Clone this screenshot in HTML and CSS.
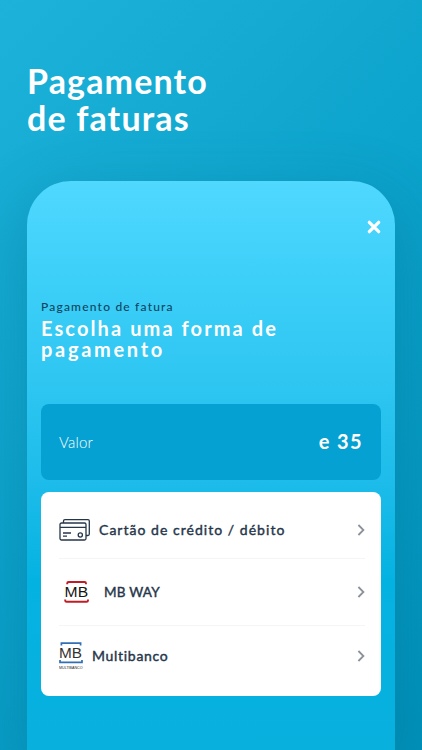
FILE: index.html
```html
<!doctype html>

<html lang="pt">

<head>

  <title>Pagamento de faturas</title>
  <meta charset="utf-8">
  <link rel="stylesheet" href="styles.css">

</head>

<body>

  <h1 class="title">Pagamento<br>de faturas</h1>

  <section class="phone">
      <button type="button" class="close" aria-label="Fechar">
          <svg width="14" height="14" viewBox="0 0 14 14"><path d="M2.3 2.3L11.7 11.7M11.7 2.3L2.3 11.7"/></svg>
      </button>

      <p class="subtitle">Pagamento de fatura</p>
      <h2 class="heading">Escolha uma forma de<br><span class="heading2">pagamento</span></h2>

      <div class="amount">
          <span class="label">Valor</span>
          <span class="value">e 35</span>
      </div>

      <div class="methods">
          <div class="method card">
              <svg class="icon" width="32" height="24" viewBox="0 0 32 24">
                  <g fill="none" stroke="#26364a" stroke-width="1.3" stroke-linejoin="round">
                      <path d="M4.5 5V3Q4.5 1.6 6 1.6H29Q30.3 1.6 30.3 3V16Q30.3 17.5 29 17.5H27"/>
                      <rect x="1" y="5" width="26" height="17" rx="1.5"/>
                      <path d="M1 9.4H27M4 15H12M4 18.2H8"/>
                      <circle cx="21.3" cy="17" r="2.1"/>
                  </g>
              </svg>
              <span class="name">Cartão de crédito / débito</span>
              <svg class="arrow" width="8" height="12" viewBox="0 0 8 12"><path d="M1.4 1L6.4 6L1.4 11"/></svg>
          </div>
          <div class="method mbway">
              <svg class="icon" width="26" height="24" viewBox="0 0 26 24">
                  <path d="M3.2 4.2V3.4Q3.2 2 4.6 2H20.6Q22 2 22 3.4V4.2M1.2 19.6V20.4Q1.2 21.8 2.6 21.8H22.6Q24 21.8 24 20.4V19.6" fill="none" stroke="#c01c26" stroke-width="1.9"/>
                  <text x="0.6" y="17" textLength="23.5" lengthAdjust="spacingAndGlyphs" class="logo">MB</text>
              </svg>
              <span class="name">MB WAY</span>
              <svg class="arrow" width="8" height="12" viewBox="0 0 8 12"><path d="M1.4 1L6.4 6L1.4 11"/></svg>
          </div>
          <div class="method multibanco">
              <svg class="icon" width="25" height="30" viewBox="0 0 25 30">
                  <path d="M2.4 4.6V2.2H21.6V4.6M1 19V21.4H23V19" fill="none" stroke="#326fb4" stroke-width="1.7"/>
                  <text x="0" y="17" textLength="23" lengthAdjust="spacingAndGlyphs" class="logo grey">MB</text>
                  <text x="0" y="28" textLength="23.5" lengthAdjust="spacingAndGlyphs" class="logo small">MULTIBANCO</text>
              </svg>
              <span class="name">Multibanco</span>
              <svg class="arrow" width="8" height="12" viewBox="0 0 8 12"><path d="M1.4 1L6.4 6L1.4 11"/></svg>
          </div>
      </div>
  </section>

</body>
</html>
```

FILE: styles.css
```css
* {
  box-sizing: border-box;
}
body {
  margin: 0;
  height: 750px;
  overflow: hidden;
  padding: 62px 27px 0;
  font-family: Lato, "Liberation Sans", sans-serif;
  background: linear-gradient(135deg, #1db2d9 0%, #0ba2cb 50%, #0092bb 100%);
}
.title {
  margin: 0;
  height: 119px;
  color: #fff;
  font-size: 34px;
  font-weight: bold;
  line-height: 37px;
  letter-spacing: 1.15px;
}
.phone {
  height: 569px;
  padding: 39px 14px 0;
  border-radius: 44px 44px 0 0;
  background: linear-gradient(180deg, #50d8ff 0px, #3ccff8 100px, #2dc5f1 210px, #1bbbe9 310px, #04b2e1 400px, #08b0de 569px);
  box-shadow: 0 20px 60px 10px rgba(0, 85, 115, 0.22);
}
.close {
  display: block;
  width: 14px;
  height: 14px;
  margin-left: auto;
  padding: 0;
  border: 0;
  background: none;
}
.close svg {
  display: block;
  fill: none;
  stroke: #fff;
  stroke-width: 3.2;
  stroke-linecap: round;
}
.subtitle {
  margin: 65px 0 0;
  height: 19px;
  color: #11455f;
  font-size: 12px;
  font-weight: 500;
  line-height: 16px;
  letter-spacing: 1.2px;
}
.heading {
  margin: 0;
  height: 86px;
  color: #fff;
  font-size: 20px;
  font-weight: bold;
  line-height: 21px;
  letter-spacing: 2.1px;
}
.heading2 {
  letter-spacing: 2.7px;
}
.amount {
  display: flex;
  justify-content: space-between;
  align-items: center;
  height: 76px;
  padding: 0 18px;
  border-radius: 8px;
  color: #fff;
  background: #05a1d2;
}
.label {
  font-size: 15px;
  font-weight: 300;
  letter-spacing: 0.2px;
}
.value {
  margin-top: -2px;
  font-size: 20px;
  font-weight: bold;
  letter-spacing: 1.4px;
}
.methods {
  height: 204px;
  margin-top: 12px;
  padding: 9px 16px 0 18px;
  border-radius: 8px;
  background: #fff;
}
.method {
  display: flex;
  align-items: center;
  height: 57px;
}
.method + .method {
  border-top: 1px solid #f5f5f6;
}
.mbway {
  height: 67px;
  padding-left: 5px;
}
.multibanco {
  height: 60px;
}
.name {
  margin: -1px 0 0 8px;
  color: #26364a;
  font-size: 14px;
  letter-spacing: 1.03px;
  -webkit-text-stroke: 0.4px #26364a;
}
.mbway .name {
  margin-left: 14px;
  font-size: 13.5px;
  letter-spacing: 0.2px;
}
.multibanco .name {
  letter-spacing: 0.7px;
}
.arrow {
  margin-left: auto;
  fill: none;
  stroke: #8b919a;
  stroke-width: 1.8;
}
.logo {
  fill: #151515;
  font-family: "Liberation Sans", sans-serif;
  font-size: 15px;
}
.grey {
  fill: #333;
}
.small {
  fill: #222;
  font-size: 3.8px;
}
```
